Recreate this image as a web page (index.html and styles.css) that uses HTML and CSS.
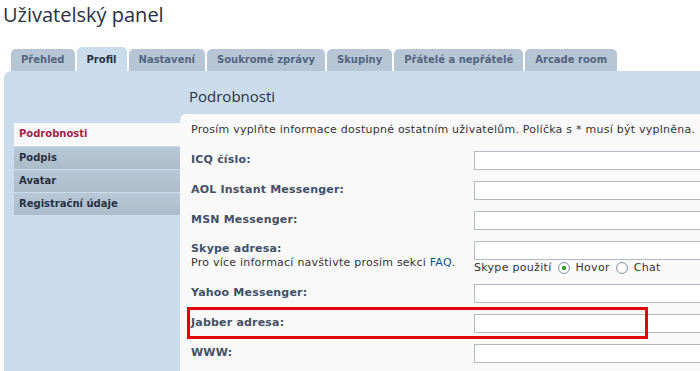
FILE: index.html
```html
<!DOCTYPE html>
<html>
<head>
    <meta charset="UTF-8">
    <title>Uživatelský panel</title>
    <link rel="stylesheet" href="styles.css">
</head>
<body>
    <div class="page">
        <h1 class="page-title">Uživatelský panel</h1>
        <div class="tabs">
            <a class="tab">Přehled</a>
            <a class="tab active">Profil</a>
            <a class="tab">Nastavení</a>
            <a class="tab">Soukromé zprávy</a>
            <a class="tab">Skupiny</a>
            <a class="tab">Přátelé a nepřátelé</a>
            <a class="tab">Arcade room</a>
        </div>
        <div class="panel">
            <ul class="side-menu">
                <li class="active">Podrobnosti</li>
                <li>Podpis</li>
                <li>Avatar</li>
                <li>Registrační údaje</li>
            </ul>
            <div class="main">
                <h2 class="section-title">Podrobnosti</h2>
                <div class="content">
                    <p class="intro">Prosím vyplňte informace dostupné ostatním uživatelům. Políčka s * musí být vyplněna.</p>
                    <div class="form">
                        <div class="row">
                            <label>ICQ číslo:</label>
                            <div class="field"><input type="text"></div>
                        </div>
                        <div class="row">
                            <label>AOL Instant Messenger:</label>
                            <div class="field"><input type="text"></div>
                        </div>
                        <div class="row">
                            <label>MSN Messenger:</label>
                            <div class="field"><input type="text"></div>
                        </div>
                        <div class="row row-skype">
                            <div>
                                <label>Skype adresa:</label>
                                <span class="explain">Pro více informací navštivte prosím sekci <a href="#">FAQ</a>.</span>
                            </div>
                            <div class="field">
                                <input type="text">
                                <div class="radios">
                                    Skype použití
                                    <span class="radio checked"></span> Hovor
                                    <span class="radio"></span> Chat
                                </div>
                            </div>
                        </div>
                        <div class="row">
                            <label>Yahoo Messenger:</label>
                            <div class="field"><input type="text"></div>
                        </div>
                        <div class="row highlighted">
                            <label>Jabber adresa:</label>
                            <div class="field"><input type="text"></div>
                            <span class="marker"></span>
                        </div>
                        <div class="row">
                            <label>WWW:</label>
                            <div class="field"><input type="text"></div>
                        </div>
                    </div>
                </div>
            </div>
        </div>
    </div>
</body>
</html>
```

FILE: styles.css
```css
html{
    overflow:hidden;
}
body{
    margin:0;
    background:#fff;
    font-family:"DejaVu Sans", Verdana, sans-serif;
    font-size:10px;
    color:#333;
}
.page{
    height:371px;
    padding-left:4px;
    overflow:hidden;
}
.page-title{
    margin:0 0 0 -1px;
    padding:2px 0 0 0;
    height:45px;
    font-family:"Open Sans", "Trebuchet MS", sans-serif;
    font-size:20px;
    font-weight:normal;
    line-height:26px;
    color:#28313f;
}
.tabs{
    display:flex;
    align-items:flex-end;
    gap:2px;
    padding-left:7px;
    height:24px;
}
.tab{
    display:block;
    height:22px;
    line-height:22px;
    padding:0 10px;
    background:#b6c6d4;
    border-radius:5px 5px 0 0;
    font-weight:bold;
    color:#536482;
    white-space:nowrap;
}
.tab.active{
    height:24px;
    line-height:26px;
    background:#cadceb;
    color:#28313f;
}
.panel{
    display:flex;
    background:#cadceb;
    border-radius:7px 0 0 0;
    height:300px;
    overflow:hidden;
}
.side-menu{
    list-style:none;
    margin:52px 0 0 10px;
    padding:0;
    width:166px;
    flex:none;
}
.side-menu li{
    height:22px;
    line-height:22px;
    padding-left:5px;
    margin-bottom:1px;
    font-weight:bold;
    color:#28313f;
    background:linear-gradient(#b9c8d6, #abbbca);
}
.side-menu li.active{
    height:23px;
    background:#f9f9f9;
    color:#a5224a;
    margin-right:-1px;
}
.main{
    flex:1;
    min-width:0;
}
.section-title{
    margin:0;
    height:43px;
    padding-left:9px;
    font-family:"Open Sans", "Trebuchet MS", sans-serif;
    font-size:15px;
    font-weight:normal;
    line-height:51px;
    color:#28313f;
}
.content{
    background:#f9f9f9;
    border-radius:6px 0 0 0;
    padding:0 0 0 11px;
    height:257px;
}
.intro{
    margin:0;
    padding-top:9px;
    height:24px;
    font-size:11px;
    line-height:14px;
    letter-spacing:0.24px;
    white-space:nowrap;
}
.row{
    position:relative;
    display:grid;
    grid-template-columns:283px 1fr;
    height:30px;
    align-items:start;
}
.row label{
    display:block;
    padding-top:6px;
    font-size:11px;
    font-weight:bold;
    line-height:14px;
    letter-spacing:0.2px;
    color:#425067;
}
.row input{
    display:block;
    box-sizing:border-box;
    width:260px;
    height:19px;
    margin:4px 0 0 0;
    border:1px solid #b4bac0;
    background:#fff;
}
.row-skype{
    height:43px;
}
.row-skype label{
    padding-top:5px;
}
.explain{
    display:block;
    font-size:11px;
    line-height:13px;
    letter-spacing:0.24px;
}
.explain a{
    color:#105289;
    text-decoration:none;
}
.radios{
    display:flex;
    align-items:center;
    gap:6px;
    font-size:11px;
    line-height:16px;
    height:16px;
    letter-spacing:0.3px;
    white-space:nowrap;
}
.radio{
    display:inline-block;
    width:12px;
    height:12px;
    border:1px solid #8b96a0;
    border-radius:50%;
    background:radial-gradient(circle, #fff 40%, #e3e6ea 100%);
    box-sizing:border-box;
}
.radio.checked{
    background:radial-gradient(circle, #3c9a3c 0 2px, #fff 2.5px 45%, #e3e6ea 100%);
}
.marker{
    position:absolute;
    left:-4px;
    top:-3px;
    width:461px;
    height:32px;
    border:3px solid #e3000b;
    box-sizing:border-box;
}
```
